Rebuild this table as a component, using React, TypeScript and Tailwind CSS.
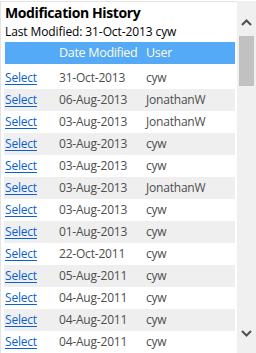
import React from "react";

const rows: [string, string][] = [
  ["31-Oct-2013", "cyw"],
  ["06-Aug-2013", "JonathanW"],
  ["03-Aug-2013", "JonathanW"],
  ["03-Aug-2013", "cyw"],
  ["03-Aug-2013", "cyw"],
  ["03-Aug-2013", "JonathanW"],
  ["03-Aug-2013", "cyw"],
  ["01-Aug-2013", "cyw"],
  ["22-Oct-2011", "cyw"],
  ["05-Aug-2011", "cyw"],
  ["04-Aug-2011", "cyw"],
  ["04-Aug-2011", "cyw"],
  ["04-Aug-2011", "cyw"],
];

export default function App() {
  return (
    <div
      className="w-[256px] h-[353px] overflow-hidden bg-white flex"
      style={{ fontFamily: "'Open Sans', 'Noto Sans', sans-serif" }}
    >
      <div className="flex-1 min-w-0 border-t border-l border-[#e3e3e3] mt-[1px] flex flex-col">
        <div className="pl-[4px] pt-[1px] text-[14px] font-bold leading-[20px] text-black tracking-[-0.4px]">
          Modification History
        </div>
        <div className="pl-[4px] text-[12px] leading-[18px] text-black tracking-[-0.1px]">
          Last Modified: 31-Oct-2013 cyw
        </div>
        <div className="ml-[4px] mr-[2px] mt-[1px] h-[22px] bg-[#55aaf8] grid grid-cols-[54px_87px_1fr] items-center text-[12.5px] text-[#fdfde0] tracking-[-0.3px] whitespace-nowrap">
          <div />
          <div>Date Modified</div>
          <div>User</div>
        </div>
        <div className="mt-[3px] flex flex-col">
          {rows.map(([d, u], i) => (
            <div
              key={i}
              className={
                "ml-[3px] mr-[2px] h-[22px] grid grid-cols-[55px_87px_1fr] items-center text-[12px] text-[#4d4d4d] tracking-[-0.2px] " +
                (i % 2 === 1 ? "bg-[#efefef]" : "bg-white")
              }
            >
              <a className="pl-[1px] text-[#0a5fd6] underline underline-offset-2" href="#">
                Select
              </a>
              <div>{d}</div>
              <div>{u}</div>
            </div>
          ))}
        </div>
      </div>
      <div className="w-[19px] mt-[1px] bg-[#f0f0f0] flex flex-col items-center">
        <div className="h-[35px] w-full flex items-center justify-center pt-[8px]">
          <svg width="11" height="7" viewBox="0 0 11 7">
            <path d="M1 6 L5.5 1.5 L10 6" fill="none" stroke="#505050" strokeWidth="2" />
          </svg>
        </div>
        <div className="w-[15px] h-[50px] bg-[#c1c1c1]" />
        <div className="flex-1" />
        <div className="h-[40px] w-full flex items-center justify-center">
          <svg width="11" height="7" viewBox="0 0 11 7">
            <path d="M1 1 L5.5 5.5 L10 1" fill="none" stroke="#505050" strokeWidth="2" />
          </svg>
        </div>
      </div>
    </div>
  );
}
